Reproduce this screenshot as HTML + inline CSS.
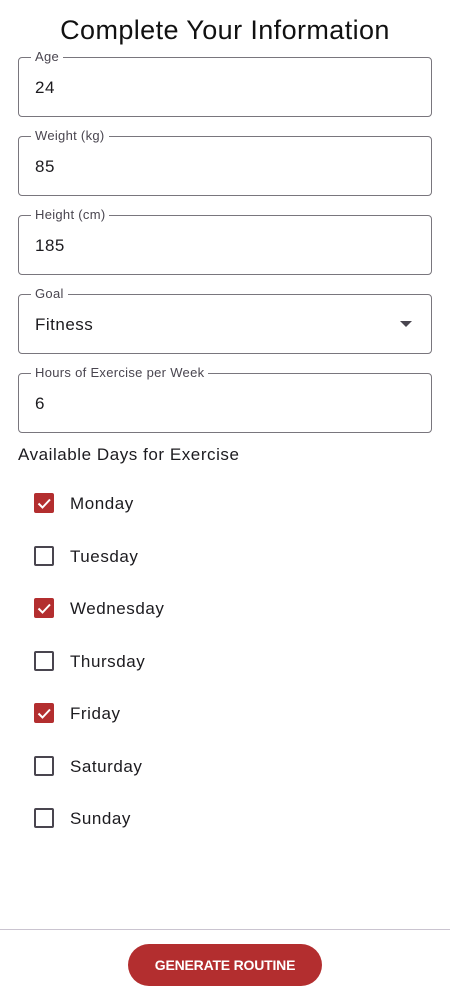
<!DOCTYPE html>
<html><head><style>
body{margin:0;width:450px;height:1000px;background:#fff;font-family:"Liberation Sans",sans-serif;color:#1c1b1f;position:relative;overflow:hidden}
.t{position:absolute;top:15px;left:0;width:450px;text-align:center;font-size:27px;color:#111;letter-spacing:0.4px}
.f{position:absolute;left:18px;width:412px;height:58px;border:1px solid #79767d;border-radius:4px}
.f .l{position:absolute;top:-9px;left:12px;padding:0 4px;background:#fff;font-size:13px;color:#49454f;line-height:16px;letter-spacing:0.3px}
.f .v{position:absolute;left:16px;top:20px;font-size:17px;line-height:20px;letter-spacing:0.5px}
.sec{position:absolute;left:18px;top:445px;font-size:17px;letter-spacing:0.55px}
.c{position:absolute;left:34px;width:20px;height:20px;box-sizing:border-box;border:2px solid #49454f;border-radius:2px}
.c.on{background:#b32e2f;border-color:#b32e2f}
.d{position:absolute;left:70px;font-size:17px;line-height:20px;letter-spacing:0.55px;margin-top:1px}
.hr{position:absolute;top:929px;left:0;width:450px;height:1px;background:#cac4d0}
.b{position:absolute;left:128px;top:944px;width:194px;height:42px;border-radius:21px;background:#b32e2f;color:#fff;font-size:14px;font-weight:bold;text-align:center;line-height:42px;letter-spacing:-0.2px}
</style></head><body>
<div class="t">Complete Your Information</div>
<div class="f" style="top:57px"><span class="l">Age</span><span class="v">24</span></div>
<div class="f" style="top:136px"><span class="l">Weight (kg)</span><span class="v">85</span></div>
<div class="f" style="top:215px"><span class="l">Height (cm)</span><span class="v">185</span></div>
<div class="f" style="top:294px"><span class="l">Goal</span><span class="v">Fitness</span><svg style="position:absolute;right:19px;top:26px" width="12" height="6"><path d="M0 0L12 0L6 6Z" fill="#49454f"/></svg></div>
<div class="f" style="top:373px"><span class="l">Hours of Exercise per Week</span><span class="v">6</span></div>
<div class="sec">Available Days for Exercise</div>
<div class="c on" style="top:493px"><svg width="16" height="16" style="position:absolute;left:0;top:0"><path d="M2.5 8.5L6.5 12.5L14 4.5" stroke="#fff" stroke-width="2" fill="none"/></svg></div><div class="d" style="top:493px">Monday</div>
<div class="c" style="top:546px"></div><div class="d" style="top:546px">Tuesday</div>
<div class="c on" style="top:598px"><svg width="16" height="16" style="position:absolute;left:0;top:0"><path d="M2.5 8.5L6.5 12.5L14 4.5" stroke="#fff" stroke-width="2" fill="none"/></svg></div><div class="d" style="top:598px">Wednesday</div>
<div class="c" style="top:651px"></div><div class="d" style="top:651px">Thursday</div>
<div class="c on" style="top:703px"><svg width="16" height="16" style="position:absolute;left:0;top:0"><path d="M2.5 8.5L6.5 12.5L14 4.5" stroke="#fff" stroke-width="2" fill="none"/></svg></div><div class="d" style="top:703px">Friday</div>
<div class="c" style="top:756px"></div><div class="d" style="top:756px">Saturday</div>
<div class="c" style="top:808px"></div><div class="d" style="top:808px">Sunday</div>
<div class="hr"></div>
<div class="b">GENERATE ROUTINE</div>
</body></html>
